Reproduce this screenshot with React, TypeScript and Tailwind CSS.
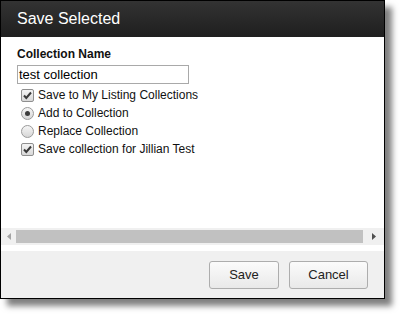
import React from "react";

function CheckBox() {
  return (
    <span className="w-[13px] h-[13px] flex items-center justify-center border border-[#8f8f8f] rounded-[2px] bg-gradient-to-b from-[#f4f4f4] to-[#d8d8d8] shrink-0">
      <svg width="11" height="11" viewBox="0 0 11 11">
        <path d="M2 5.5 L4.3 8 L9 2.5" fill="none" stroke="#3a3a3a" strokeWidth="2" />
      </svg>
    </span>
  );
}

function Radio({ on }: { on: boolean }) {
  return (
    <span className="w-[13px] h-[13px] flex items-center justify-center border border-[#9a9a9a] rounded-full bg-gradient-to-b from-[#f6f6f6] to-[#d6d6d6] shrink-0">
      {on && <span className="w-[5px] h-[5px] rounded-full bg-[#3c3c3c]" />}
    </span>
  );
}

function Row({ control, label }: { control: React.ReactNode; label: string }) {
  return (
    <div className="h-[18px] flex items-center gap-[4px] pl-[4px]">
      {control}
      <span className="text-[12px] leading-[14px] text-[#111]">{label}</span>
    </div>
  );
}

export default function App() {
  return (
    <div className="w-[400px] h-[314px] bg-white" style={{ fontFamily: '"Liberation Sans", Arial, sans-serif' }}>
      <div className="w-[385px] h-[299px] border border-black flex flex-col shadow-[7px_7px_6px_rgba(0,0,0,0.5)] bg-white">
        <div className="h-[36px] bg-gradient-to-b from-[#333333] to-[#1f1f1f] flex items-center pl-[16px] shrink-0">
          <span className="text-white text-[16px] leading-[18px]">Save Selected</span>
        </div>
        <div className="flex-1 flex flex-col">
          <div className="flex-1 pl-[16px] pt-[10px]">
            <div className="text-[12px] leading-[14px] font-bold text-[#111]">Collection Name</div>
            <div className="mt-[4px] w-[172px] h-[19px] border border-[#a9a9a9] flex items-center pl-[1px]">
              <span className="text-[13px] leading-[15px] text-black">test collection</span>
            </div>
            <div className="mt-[2px] flex flex-col">
              <Row control={<CheckBox />} label="Save to My Listing Collections" />
              <Row control={<Radio on={true} />} label="Add to Collection" />
              <Row control={<Radio on={false} />} label="Replace Collection" />
              <Row control={<CheckBox />} label="Save collection for Jillian Test" />
            </div>
          </div>
          <div className="h-[17px] bg-[#f0f0f0] flex items-center shrink-0">
            <div className="w-[15px] flex items-center justify-center">
              <svg width="4" height="7" viewBox="0 0 4 7"><path d="M4 0 L0 3.5 L4 7 Z" fill="#a3a3a3" /></svg>
            </div>
            <div className="flex-1 h-[13px] bg-[#c1c1c1]" />
            <div className="w-[21px] flex items-center justify-center">
              <svg width="4" height="7" viewBox="0 0 4 7"><path d="M0 0 L4 3.5 L0 7 Z" fill="#505050" /></svg>
            </div>
          </div>
          <div className="h-[6px] shrink-0" />
        </div>
        <div className="h-[47px] bg-[#f0f0f0] flex items-center justify-end pr-[16px] gap-[10px] shrink-0">
          <button className="w-[70px] h-[28px] rounded-[3px] border border-[#adadad] bg-gradient-to-b from-[#fbfbfb] to-[#e9e9e9] text-[13px] text-[#222]">Save</button>
          <button className="w-[79px] h-[28px] rounded-[3px] border border-[#adadad] bg-gradient-to-b from-[#fbfbfb] to-[#e9e9e9] text-[13px] text-[#222]">Cancel</button>
        </div>
      </div>
    </div>
  );
}
